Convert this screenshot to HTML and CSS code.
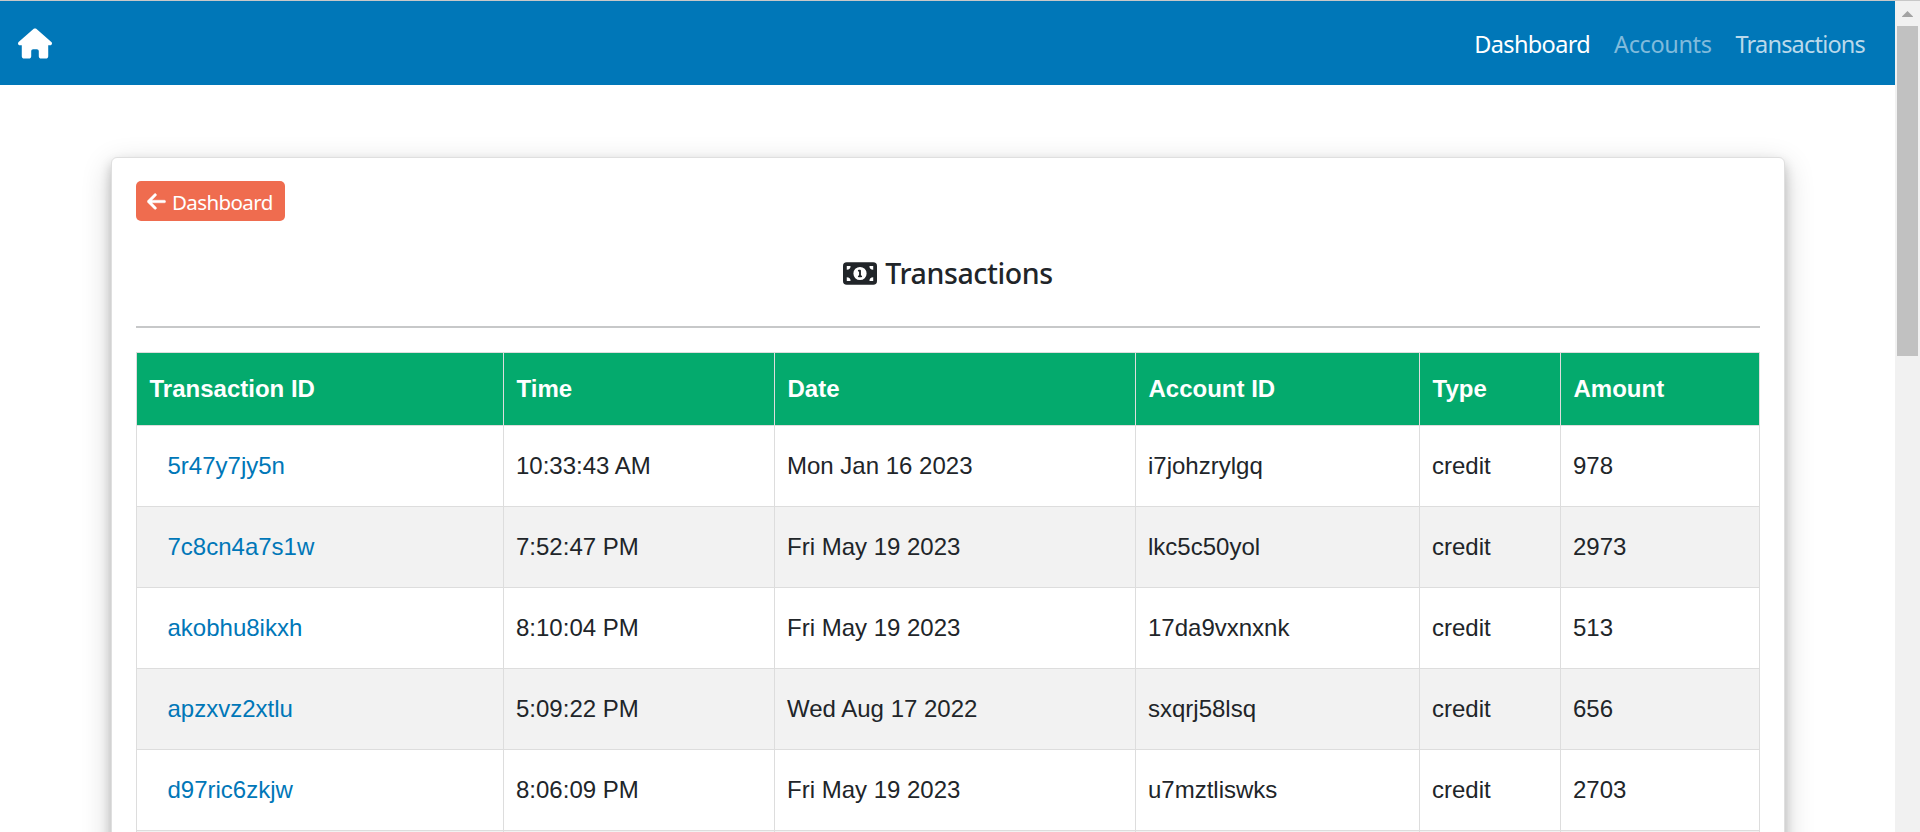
FILE: index.html
```html
<!DOCTYPE html>
<html lang="en">
<head>
<meta charset="utf-8">
<title>Transactions</title>
<link rel="stylesheet" href="styles.css">
</head>
<body>
<div class="window">
  <div class="page">
    <nav class="navbar">
      <a class="brand" href="#" aria-label="Home">
        <svg class="home-icon" viewBox="0 0 576 512"><path fill="currentColor" d="M575.8 255.5c0 18-15 32.1-32 32.1h-32l.7 160.2c0 2.700-.2 5.400-.5 8.100V472c0 22.100-17.900 40-40 40H456c-1.100 0-2.200 0-3.300-.1c-1.400 .1-2.800 .1-4.200 .1H416 392c-22.100 0-40-17.900-40-40V448 384c0-17.700-14.300-32-32-32H256c-17.700 0-32 14.300-32 32v64 24c0 22.100-17.900 40-40 40H160 128.100c-1.500 0-3-.1-4.500-.2c-1.200 .1-2.400 .2-3.600 .2H104c-22.100 0-40-17.900-40-40V360c0-.9 0-1.900 .1-2.800V287.600H32c-18 0-32-14-32-32.100c0-9 3-17 10-24L266.400 8c7-7 15-8 22-8s15 2 21 7L564.800 231.500c8 7 12 15 11 24z"/></svg>
      </a>
      <div class="nav-links">
        <a class="nav-link nav-dashboard" href="#">Dashboard</a>
        <a class="nav-link nav-accounts" href="#">Accounts</a>
        <a class="nav-link nav-transactions" href="#">Transactions</a>
      </div>
    </nav>
    <main class="card">
      <a class="back-button" href="#">
        <svg class="arrow-icon" viewBox="0 0 448 512"><path fill="currentColor" stroke="currentColor" stroke-width="10" d="M9.400 233.400c-12.500 12.500-12.500 32.800 0 45.300l160 160c12.500 12.500 32.800 12.500 45.300 0s12.500-32.800 0-45.300L109.200 288 416 288c17.700 0 32-14.300 32-32s-14.300-32-32-32l-306.700 0L214.600 118.600c12.500-12.500 12.500-32.800 0-45.300s-32.800-12.500-45.300 0l-160 160z"/></svg>
        <span>Dashboard</span>
      </a>
      <h1 class="title">
        <svg class="bill-icon" viewBox="0 64 576 384"><path fill="currentColor" fill-rule="evenodd" d="M64 64H512a64 64 0 0 1 64 64V384a64 64 0 0 1-64 64H64a64 64 0 0 1-64-64V128a64 64 0 0 1 64-64zM64 128V192a64 64 0 0 0 64-64zM64 320V384H128a64 64 0 0 0-64-64zM512 128H448a64 64 0 0 0 64 64zM512 320a64 64 0 0 0-64 64H512zM288 144a112 112 0 1 0 0 224a112 112 0 1 0 0-224zM252 208a16 16 0 0 1 16-16H288a16 16 0 0 1 16 16V288H308a16 16 0 0 1 0 32H268a16 16 0 0 1 0-32H272V224H268a16 16 0 0 1-16-16z"/></svg>
        <span>Transactions</span>
      </h1>
      <hr class="divider">
      <table class="transactions">
        <colgroup><col class="col-id"><col class="col-time"><col class="col-date"><col class="col-account"><col class="col-type"><col class="col-amount"></colgroup>
        <thead>
          <tr><th>Transaction ID</th><th>Time</th><th>Date</th><th>Account ID</th><th>Type</th><th>Amount</th></tr>
        </thead>
        <tbody>
          <tr><td><a href="#">5r47y7jy5n</a></td><td>10:33:43 AM</td><td>Mon Jan 16 2023</td><td>i7johzrylgq</td><td>credit</td><td>978</td></tr>
          <tr><td><a href="#">7c8cn4a7s1w</a></td><td>7:52:47 PM</td><td>Fri May 19 2023</td><td>lkc5c50yol</td><td>credit</td><td>2973</td></tr>
          <tr><td><a href="#">akobhu8ikxh</a></td><td>8:10:04 PM</td><td>Fri May 19 2023</td><td>17da9vxnxnk</td><td>credit</td><td>513</td></tr>
          <tr><td><a href="#">apzxvz2xtlu</a></td><td>5:09:22 PM</td><td>Wed Aug 17 2022</td><td>sxqrj58lsq</td><td>credit</td><td>656</td></tr>
          <tr><td><a href="#">d97ric6zkjw</a></td><td>8:06:09 PM</td><td>Fri May 19 2023</td><td>u7mztliswks</td><td>credit</td><td>2703</td></tr>
          <tr><td></td><td></td><td></td><td></td><td></td><td></td></tr>
        </tbody>
      </table>
    </main>
  </div>
  <div class="scrollbar">
    <svg class="scroll-up" viewBox="0 0 11 6"><path fill="#a3a3a3" d="M5.500 0L11 5.500V6H0V5.500z"/></svg>
    <div class="thumb"></div>
  </div>
</div>
</body>
</html>
```
FILE: styles.css
```css
* { box-sizing: border-box; }

body {
  margin: 0;
  background: #fff;
  color: #212529;
  font-family: "Noto Sans", "Open Sans", sans-serif;
}

a { text-decoration: none; }
svg { display: block; flex: none; }

.window {
  display: flex;
  height: 832px;
  overflow: hidden;
  border-top: 1px solid #c8c8c8;
}

.page { width: 1895px; flex: none; }

.navbar {
  display: flex;
  justify-content: space-between;
  align-items: center;
  height: 84px;
  padding: 0 30px 0 18px;
  background: #0077b8;
}

.brand { color: #fff; }
.home-icon { width: 34px; height: 31px; }

.nav-links { display: flex; gap: 24px; padding-top: 2px; }
.nav-link {
  font-size: 23.5px;
  line-height: 36px;
  white-space: nowrap;
}
.nav-dashboard { color: #fff; letter-spacing: -0.65px; }
.nav-accounts { color: #80bbdc; letter-spacing: -0.4px; }
.nav-transactions { color: #b9d9eb; letter-spacing: -0.8px; }

.card {
  width: 1674px;
  height: 900px;
  margin: 72px 0 0 111px;
  padding: 23px 24px;
  border: 1px solid #dfdfdf;
  border-radius: 6px;
  background: #fff;
  box-shadow: 0 6px 12px rgba(0, 0, 0, 0.2), 0 9px 30px rgba(0, 0, 0, 0.19);
}

.back-button {
  display: flex;
  align-items: center;
  gap: 6px;
  width: 149px;
  height: 40px;
  padding-left: 11px;
  border-radius: 5px;
  background: #ef6c4f;
  color: #fff;
  font-size: 20.5px;
  line-height: 32px;
  letter-spacing: -0.6px;
}
.back-button span { padding-top: 2px; }
.arrow-icon { width: 19px; height: 21px; }

.title {
  display: flex;
  justify-content: center;
  align-items: center;
  gap: 8px;
  height: 36px;
  margin: 34px 0 35px;
  font-size: 28.5px;
  font-weight: 500;
  line-height: 36px;
  letter-spacing: -0.4px;
}
.bill-icon { width: 34px; height: 23px; }

.divider {
  height: 2px;
  margin: 0 0 24px;
  border: 0;
  background: #c7c8c9;
}

.transactions {
  width: 1624px;
  table-layout: fixed;
  border-collapse: collapse;
  font-family: "Liberation Sans", Arial, sans-serif;
  font-size: 24px;
  line-height: 36px;
}
.col-id { width: 367px; }
.col-time { width: 271px; }
.col-date { width: 361px; }
.col-account { width: 284px; }
.col-type { width: 141px; }

.transactions th,
.transactions td {
  height: 81px;
  padding: 0 12px;
  border: 1px solid #ddd;
  text-align: left;
}
.transactions th {
  height: 73px;
  padding-left: 12.5px;
  background: #04aa6d;
  color: #fff;
}
.transactions tbody tr:nth-child(even) { background: #f2f2f2; }
.transactions td a { padding-left: 18.5px; color: #0077b8; }

.scrollbar {
  width: 25px;
  padding: 10px 2px 0;
  background: #f1f1f1;
}
.scroll-up { width: 11px; height: 6px; margin: 0 0 9px 5px; }
.thumb { width: 21px; height: 330px; background: #c1c1c1; }
```
